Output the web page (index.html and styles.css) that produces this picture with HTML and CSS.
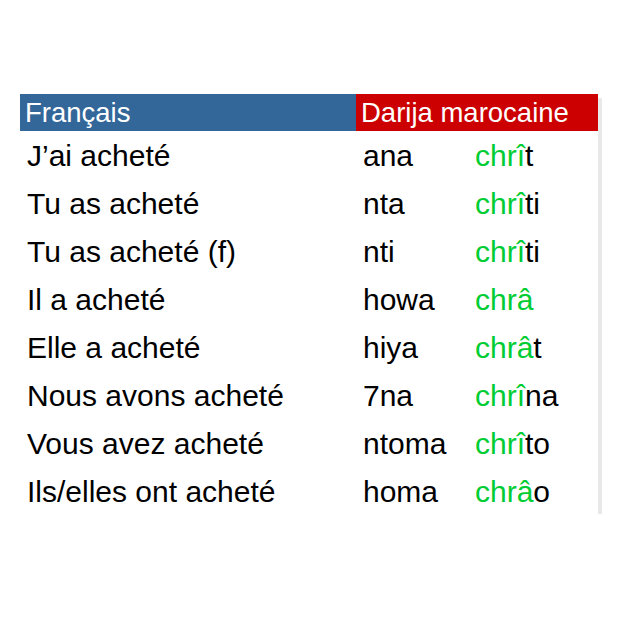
FILE: index.html
```html
<!DOCTYPE html>
<html lang="fr">
<head>
<meta charset="utf-8">
<link rel="stylesheet" href="styles.css">
</head>
<body>
<div class="table">
  <div class="head fr">Français</div>
  <div class="head ma">Darija marocaine</div>

  <div class="c1">J’ai acheté</div><div class="c2">ana</div><div class="c3"><span class="g">chrî</span>t</div>
  <div class="c1">Tu as acheté</div><div class="c2">nta</div><div class="c3"><span class="g">chrî</span>ti</div>
  <div class="c1">Tu as acheté (f)</div><div class="c2">nti</div><div class="c3"><span class="g">chrî</span>ti</div>
  <div class="c1">Il a acheté</div><div class="c2">howa</div><div class="c3"><span class="g">chrâ</span></div>
  <div class="c1">Elle a acheté</div><div class="c2">hiya</div><div class="c3"><span class="g">chrâ</span>t</div>
  <div class="c1">Nous avons acheté</div><div class="c2">7na</div><div class="c3"><span class="g">chrî</span>na</div>
  <div class="c1">Vous avez acheté</div><div class="c2">ntoma</div><div class="c3"><span class="g">chrî</span>to</div>
  <div class="c1">Ils/elles ont acheté</div><div class="c2">homa</div><div class="c3"><span class="g">chrâ</span>o</div>
</div>
</body>
</html>
```
FILE: styles.css
```css
html, body {
  margin: 0;
  padding: 0;
  background: #ffffff;
}
body {
  font-family: "Liberation Sans", Arial, sans-serif;
  color: #000;
  padding-top: 94px;
  padding-left: 20px;
}
.table {
  width: 578px;
  display: grid;
  grid-template-columns: 336px 119px 1fr;
  grid-template-rows: 37px;
  grid-auto-rows: 47.9px;
  background: #fff;
  box-shadow: 4px 4px 0 #e9e9e9;
}
.head {
  color: #fff;
  font-size: 27.5px;
  display: flex;
  align-items: center;
  line-height: 1;
}
.fr {
  background: #336699;
  padding-left: 5px;
}
.ma {
  background: #cc0000;
  grid-column: 2 / 4;
  padding-left: 5px;
}
.c1, .c2, .c3 {
  font-size: 30px;
  display: flex;
  align-items: center;
  line-height: 1;
  padding-top: 3px;
}
.c1 { padding-left: 7px; }
.c2 { padding-left: 7px; }
.g { color: #00cc33; }
```
